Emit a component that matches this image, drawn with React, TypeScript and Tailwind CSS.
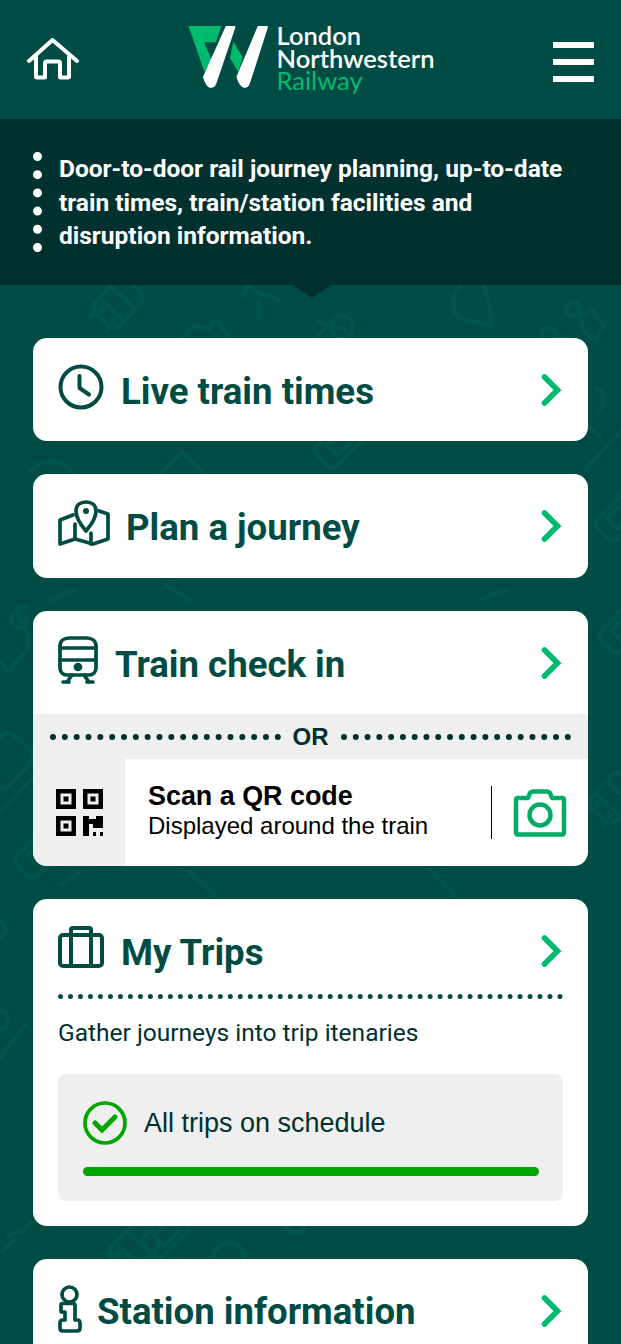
import { ChevronRight } from "lucide-react";

const Chevron = ({ className = "" }: { className?: string }) => (
  <ChevronRight className={`w-[52px] h-[52px] text-[#00bb6e] -mr-[14px] shrink-0 ${className}`} strokeWidth={2.6} strokeLinecap="round" strokeLinejoin="miter" />
);

const Bus = ({ x, y, r }: { x: number; y: number; r: number }) => (
  <g transform={`translate(${x} ${y}) rotate(${r})`}>
    <rect x="-17" y="-26" width="34" height="46" rx="8" />
    <path d="M-17 -10H17M-17 6H17M-11 20V26M11 20V26" />
    <circle cx="-8" cy="13" r="1.5" />
    <circle cx="8" cy="13" r="1.5" />
  </g>
);

const Phone = ({ x, y, r }: { x: number; y: number; r: number }) => (
  <g transform={`translate(${x} ${y}) rotate(${r})`}>
    <rect x="-14" y="-22" width="28" height="44" rx="6" />
    <path d="M-7 -14H7V8H-7Z" />
  </g>
);

// faint line icons behind the cards, coordinates are page pixels
const Pattern = () => (
  <svg className="absolute left-0 top-0 w-[621px] h-[1225px]" viewBox="0 119 621 1225" fill="none" stroke="#00554a" strokeWidth="4.500" strokeLinecap="round" strokeLinejoin="round">
    <Bus x={116} y={305} r={42} />
    <path d="M243 296L247 286M250 286C255 294 266 294 278 300M259 300V318" />
    <path d="M460 286C449 300 452 315 464 320L491 325C492 312 488 298 484 286" />
    <circle cx="573" cy="309" r="7" />
    <path d="M580 316L592 310L604 326L596 340L584 332Z" />
    <circle cx="549" cy="335" r="7" />
    <path d="M556 335L575 341" />
    <circle cx="342" cy="327" r="11" />
    <path d="M313 340L336 316M318 322L345 330" />
    <path d="M180 340L195 325L208 330L216 320L232 340" />
    <path d="M598 412C606 402 606 392 596 388M621 430L585 470M588 425L600 437" />
    <Phone x={618} y={518} r={45} />
    <Phone x={622} y={630} r={45} />
    <Bus x={612} y={800} r={42} />
    <path d="M27 610C22 600 10 610 20 618C24 624 30 636 28 648L8 672L0 660" />
    <circle cx="19" cy="620" r="8" />
    <rect x="-14" y="736" width="40" height="50" rx="10" transform="rotate(42 6 760)" />
    <path d="M36 775L0 812" />
    <Phone x={38} y={855} r={45} />
    <path d="M0 920L6 930L0 940" />
    <circle cx="-2" cy="1020" r="10" />
    <path d="M25 1025L-2 1060" />
    <path d="M8 1235L24 1230L30 1222M14 1240L2 1252" />
    <Bus x={132} y={1250} r={42} />
    <Phone x={165} y={1235} r={45} />
    <circle cx="229" cy="1259" r="16" />
    <path d="M285 1226C290 1232 296 1234 303 1232L304 1222" />
    <path d="M30 470C50 455 65 460 75 476M160 474L182 452L205 474" />
    <Phone x={338} y={445} r={45} />
    <path d="M50 600L75 590M165 585L190 600M480 600L505 590" />
    <path d="M60 885L80 872M190 872L215 895M430 870L455 895" />
  </svg>
);

const Logo = () => (
  <div className="flex items-start mr-[10px]">
    <svg viewBox="0 0 82 66" className="w-[82px] h-[66px] mt-[25px] shrink-0">
      <path d="M0.500 1H33.500L27.700 17.300H16.300L23.500 35L16.500 47Z" fill="#00bb6e" />
      <path d="M45.300 16.700L54.700 32.300L50.300 47L42 33.300Z" fill="#00bb6e" />
      <path d="M38.500 2H46.500L27.500 58C26.500 61 24.500 62.500 21.500 61.500C19 60.500 17.500 57 16 52Z" fill="#fff" stroke="#fff" strokeWidth="2" strokeLinejoin="round" />
      <path d="M70.500 2H79L61 58C60 61 58 62.500 55.500 61.500C53 60.500 51 57 49.500 52Z" fill="#fff" stroke="#fff" strokeWidth="2" strokeLinejoin="round" />
    </svg>
    <div className="mt-[24px] ml-[7px] font-['Lato',sans-serif] font-semibold text-[25.500px] leading-[22.500px] text-white">
      <div>London</div>
      <div>Northwestern</div>
      <div className="text-[#00bb6e] font-normal">Railway</div>
    </div>
  </div>
);

export default function App() {
  return (
    <div className="relative h-screen overflow-hidden bg-[#004c45] font-['Roboto',sans-serif]">
      <header className="flex justify-between h-[119px] px-[27px]">
        <svg viewBox="0 0 52 44" className="w-[52px] h-[44px] mt-[38px] shrink-0" fill="none" stroke="#fff" strokeWidth="4" strokeLinecap="round" strokeLinejoin="round">
          <path d="M2 23L25.500 2L50 23" />
          <path d="M9 19V38.500Q9 39.500 10 39.500H18V25Q18 23.500 19.500 23.500H31.500Q33 23.500 33 25V39.500H41Q42 39.500 42 38.500V19" />
        </svg>
        <Logo />
        <div className="flex flex-col gap-[11px] mt-[42px] w-[41px]">
          <div className="h-[6px] bg-white" />
          <div className="h-[6px] bg-white" />
          <div className="h-[6px] bg-white" />
        </div>
      </header>

      <div className="relative">
        <div className="absolute left-0 top-0 w-full h-[1225px] overflow-hidden">
          <Pattern />
        </div>
        <div className="relative">
          <div className="relative flex h-[166px] bg-[#00312f] pl-[33px] pt-[33px]">
            <div className="h-[100px] border-l-[9px] border-dotted border-white" />
            <p className="ml-[17px] w-[515px] font-bold text-[24.500px] leading-[33.500px] text-white">
              Door-to-door rail journey planning, up-to-date train times, train/station facilities and disruption information.
            </p>
            <div className="absolute left-[293px] top-full w-0 h-0 border-x-[19px] border-x-transparent border-t-[13px] border-t-[#00312f]" />
          </div>

          <div className="flex flex-col gap-[33px] px-[33px] pt-[53px]">
            <a className="flex items-center h-[103px] rounded-[14px] bg-white px-[25px]">
              <svg viewBox="0 0 46 46" className="w-[46px] h-[46px] mb-[6px] shrink-0" fill="none" stroke="#004c45" strokeWidth="4" strokeLinecap="round" strokeLinejoin="round">
                <circle cx="23" cy="23" r="20.500" />
                <path d="M21.500 12V24L31 30.500" />
              </svg>
              <span className="ml-[17px] flex-1 pt-[5px] font-bold text-[36.600px] text-[#004c45]">Live train times</span>
              <Chevron />
            </a>

            <a className="flex items-center h-[104px] rounded-[14px] bg-white px-[25px]">
              <svg viewBox="0 0 52 46" className="w-[52px] h-[46px] mb-[6px] shrink-0" fill="none" stroke="#004c45" strokeWidth="3.700" strokeLinejoin="round" strokeLinecap="round">
                <path d="M28 31C22 24 18 18 18 11C18 5 22.500 2 28 2C33.500 2 38 5 38 11C38 18 34 24 28 31Z" />
                <circle cx="28" cy="11" r="1.200" fill="#004c45" />
                <path d="M15 15L2 20V44L17 39L35 44L50 39V14L41 11" />
                <path d="M17 24V39M33 33V44" />
              </svg>
              <span className="ml-[16px] flex-1 pt-[5px] font-bold text-[36.600px] text-[#004c45]">Plan a journey</span>
              <Chevron />
            </a>

            <div className="rounded-[14px] bg-white overflow-hidden">
              <a className="flex items-center h-[103px] px-[25px]">
                <svg viewBox="0 0 40 48" className="w-[40px] h-[48px] shrink-0 mb-[5px]" fill="none" stroke="#004c45" strokeWidth="3.700" strokeLinecap="round" strokeLinejoin="round">
                  <path d="M2 10C2 5 6 2 11 2H29C34 2 38 5 38 10V32C38 36 35 39 31 39H9C5 39 2 36 2 32Z" />
                  <path d="M2 12H38M2 24H38" />
                  <circle cx="20" cy="31" r="2.500" fill="#004c45" />
                  <path d="M9 46L14 39M31 46L26 39M5 46H11M29 46H35" />
                </svg>
                <span className="ml-[17px] flex-1 pt-[5px] font-bold text-[36.600px] text-[#004c45]">Train check in</span>
                <Chevron />
              </a>
              <div className="flex items-center h-[45px] bg-[#efefef] px-[17px]">
                <div className="flex-1 border-t-[6px] border-dotted border-[#00312f]" />
                <span className="mx-[12px] font-['Liberation_Sans',sans-serif] font-bold text-[24px] text-[#00312f]">OR</span>
                <div className="flex-1 border-t-[6px] border-dotted border-[#00312f]" />
              </div>
              <div className="flex h-[107px]">
                <div className="flex items-center justify-center w-[92px] bg-[#efefef]">
                  <svg viewBox="0 0 47 47" className="w-[47px] h-[47px]">
                    <path fillRule="evenodd" fill="#000" d="M0 0H20V20H0ZM4.500 4.500V15.500H15.500V4.500ZM7.500 7.500H12.500V12.500H7.500ZM27 0H47V20H27ZM31.500 4.500V15.500H42.500V4.500ZM34.500 7.500H39.500V12.500H34.500ZM0 27H20V47H0ZM4.500 31.500V42.500H15.500V31.500ZM7.500 34.500H12.500V39.500H7.500Z" />
                    <path fill="#000" d="M27 27H33V30H40V27H47V39H37V35H33V47H27ZM37 43H40V47H37ZM44 43H47V47H44Z" />
                  </svg>
                </div>
                <div className="flex-1 flex items-center font-['Liberation_Sans',sans-serif] text-black pl-[23px]">
                  <div className="flex-1 pb-[3px]">
                    <div className="font-bold text-[26.900px] leading-[30px]">Scan a QR code</div>
                    <div className="text-[24px] leading-[30px]">Displayed around the train</div>
                  </div>
                  <div className="w-px h-[53px] bg-black ml-[1px]" />
                  <svg viewBox="0 0 54 48" className="w-[54px] h-[48px] mx-[21px] shrink-0" fill="none" stroke="#00ac66" strokeWidth="4.500" strokeLinejoin="round">
                    <path d="M3 11Q3 9 5 9H15L17 4Q18 2.500 20 2.500H34Q36 2.500 37 4L39 9H49Q51 9 51 11V43Q51 45.500 49 45.500H5Q3 45.500 3 43Z" />
                    <circle cx="27" cy="26" r="10.500" />
                  </svg>
                </div>
              </div>
            </div>

            <div className="rounded-[14px] bg-white h-[327px] px-[25px]">
              <a className="flex items-center h-[95px]">
                <svg viewBox="0 0 46 42" className="w-[46px] h-[42px] shrink-0 mt-[1px]" fill="none" stroke="#004c45" strokeWidth="4" strokeLinejoin="round">
                  <rect x="2" y="9" width="42" height="31" rx="3" />
                  <path d="M13 40V4Q13 2 15 2H31Q33 2 33 4V40" />
                </svg>
                <span className="ml-[17px] flex-1 font-bold text-[36.600px] text-[#004c45] pt-[14px]">My Trips</span>
                <Chevron className="mt-[8px]" />
              </a>
              <div className="border-t-[5px] border-dotted border-[#004c45]" />
              <p className="mt-[19px] text-[24.500px] leading-[30px] text-[#00312f]">Gather journeys into trip itenaries</p>
              <div className="mt-[26px] rounded-[8px] bg-[#efefef] h-[127px] pl-[25px] pr-[24px] pt-[27px]">
                <div className="flex items-center">
                  <svg viewBox="0 0 44 44" className="w-[44px] h-[44px] shrink-0" fill="none" stroke="#00a600" strokeWidth="3.700" strokeLinecap="round">
                    <circle cx="22" cy="22" r="20" />
                    <path d="M12 22L19 29L32 16" strokeWidth="5" />
                  </svg>
                  <span className="ml-[17px] font-['Liberation_Sans',sans-serif] text-[27px] text-[#00312f]">All trips on schedule</span>
                </div>
                <div className="mt-[22px] h-[9px] rounded-full bg-[#00a600]" />
              </div>
            </div>

            <a className="flex items-center h-[104px] rounded-[14px] bg-white px-[25px]">
              <svg viewBox="0 0 24 48" className="w-[24px] h-[48px] shrink-0 mb-[5px]" fill="none" stroke="#004c45" strokeWidth="3.700" strokeLinejoin="round">
                <circle cx="11.500" cy="9.500" r="7.500" />
                <path d="M3 20Q3 18.500 4.500 18.500H15Q17 18.500 17 20V35H19Q22 35 22 38V43Q22 46 19 46H5Q2 46 2 43V38Q2 35 5 35H7V27H4Q3 27 3 26Z" />
              </svg>
              <span className="ml-[15px] flex-1 pt-[3px] font-bold text-[36.600px] text-[#004c45]">Station information</span>
              <Chevron />
            </a>
          </div>
        </div>
      </div>
    </div>
  );
}
